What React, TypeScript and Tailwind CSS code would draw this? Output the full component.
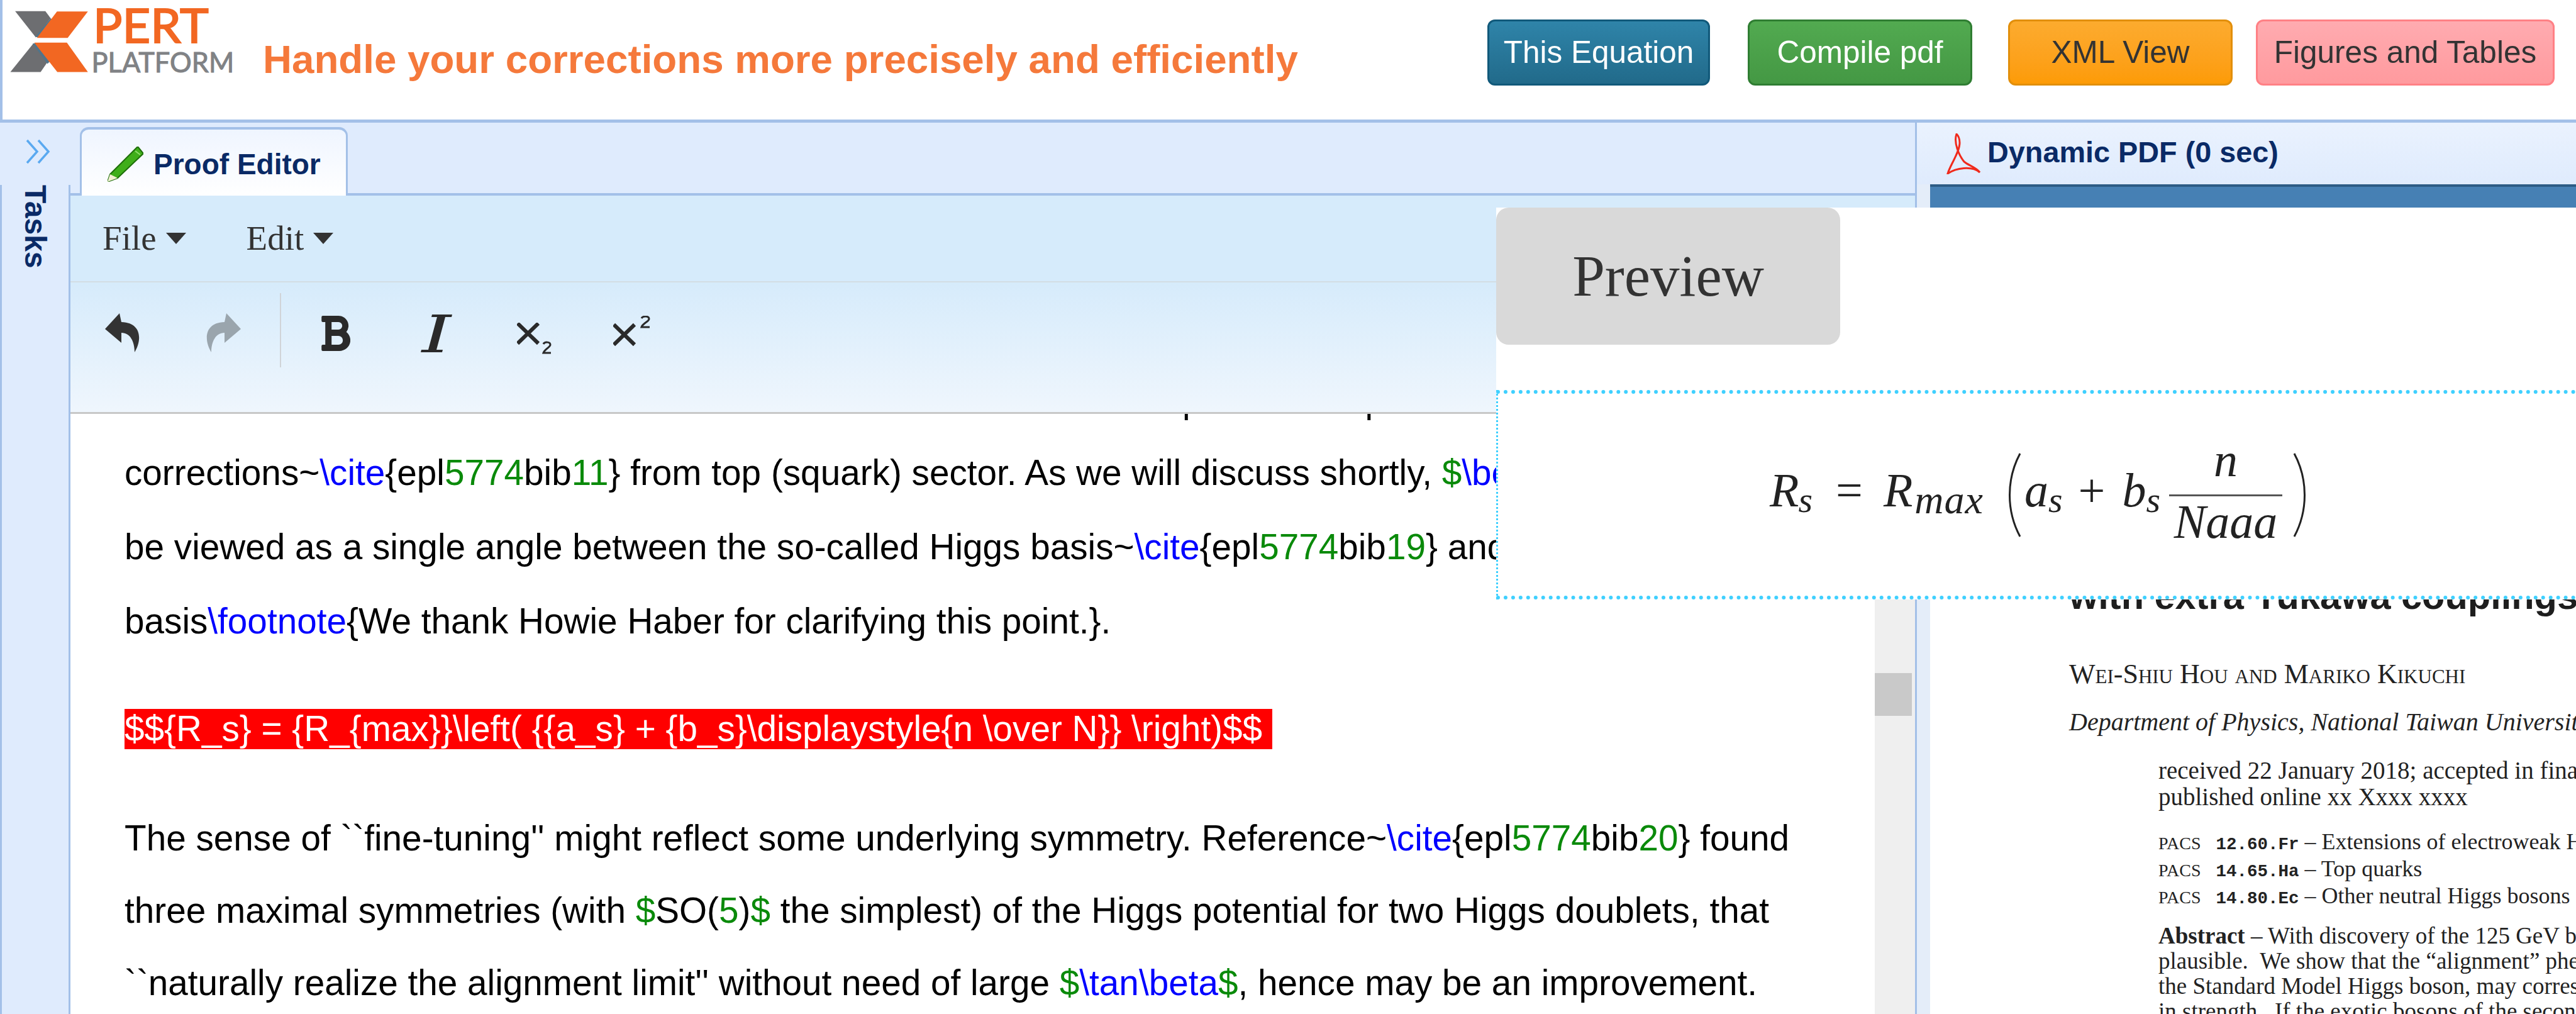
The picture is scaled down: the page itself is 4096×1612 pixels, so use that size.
import React from "react";
import { FaBold } from "react-icons/fa";

const B = ({ children }: { children: React.ReactNode }) => <span className="text-[#0000ff]">{children}</span>;
const G = ({ children }: { children: React.ReactNode }) => <span className="text-[#0a8a0a]">{children}</span>;

const Line = ({ children }: { children: React.ReactNode }) => (
  <div className="h-[115px] leading-[115px] whitespace-nowrap">{children}</div>
);

const Arrow = ({ className }: { className: string }) => (
  <svg viewBox="0 0 56 62" className={className}>
    <path d="M23 0 L0 25 L26 47 L26 31 C40 31 47 45 47 62 C58 45 60 15 26 14 Z" fill="currentColor" />
  </svg>
);

function Logo() {
  return (
    <svg viewBox="0 0 1568 540" className="w-[397px] h-[138px] -ml-[4px] shrink-0">
      <path d="M95 68 L285 68 L318 112 L225 232 Z" fill="#6d6e71" />
      <path d="M318 112 L332 124 L238 232 L222 228 Z" fill="#50748a" />
      <path d="M358 70 L552 70 L425 235 L232 235 Z" fill="#f26722" />
      <path d="M210 270 L300 385 L255 450 L65 450 Z" fill="#6d6e71" />
      <path d="M205 272 L222 268 L312 385 L298 398 Z" fill="#50748a" />
      <path d="M215 265 L420 265 L552 450 L360 450 Z" fill="#f26722" />
      <text x="585" y="265" fontFamily="Lato, sans-serif" fontSize="300" fill="#f26722" stroke="#f26722" strokeWidth="8" textLength="725" lengthAdjust="spacingAndGlyphs">PERT</text>
      <text x="575" y="450" fontFamily="Lato, sans-serif" fontSize="172" fill="#808285" stroke="#808285" strokeWidth="4" textLength="895" lengthAdjust="spacingAndGlyphs">PLATFORM</text>
    </svg>
  );
}

function Header() {
  return (
    <div className="h-[195px] shrink-0 bg-white border-l-[4px] border-b-[5px] border-[#a3c0e8] flex items-start">
      <Logo />
      <div className="ml-[21px] mt-[62px] text-[63.7px] leading-[64px] font-bold text-[#f5793b] whitespace-nowrap">
        Handle your corrections more precisely and efficiently
      </div>
      <div className="ml-auto mt-[31px] mr-[34px] flex items-start text-[49.5px]">
        <div className="w-[354px] h-[105px] flex items-center justify-center rounded-[12px] border-[3px] border-[#11597a] bg-linear-to-b from-[#2f84a9] to-[#216a8a] text-white">This Equation</div>
        <div className="w-[357px] h-[105px] ml-[60px] flex items-center justify-center rounded-[12px] border-[3px] border-[#2f7d32] bg-linear-to-b from-[#52aa50] to-[#449844] text-white">Compile pdf</div>
        <div className="w-[357px] h-[105px] ml-[57px] flex items-center justify-center rounded-[12px] border-[3px] border-[#e28f0b] bg-linear-to-b from-[#fcab2e] to-[#fd9b05] text-[#333]">XML View</div>
        <div className="w-[475px] h-[105px] ml-[37px] flex items-center justify-center rounded-[12px] border-[3px] border-[#ff8085] bg-linear-to-b from-[#ffabb0] to-[#ff9a9e] text-[#333]">Figures and Tables</div>
      </div>
    </div>
  );
}

function Sidebar() {
  return (
    <div className="w-[112px] shrink-0 flex flex-col">
      <div className="h-[99px] pt-[26px] pl-[41px]">
        <svg viewBox="0 0 39 40" className="w-[39px] h-[40px]" fill="none" stroke="#5aa9f0" strokeWidth="3.5">
          <path d="M2 2 L18 20 L2 38" />
          <path d="M20 2 L36 20 L20 38" />
        </svg>
      </div>
      <div className="flex-1 border-l-[3px] border-r-[3px] border-[#a3c0e8] pl-[28px]">
        <div className="[writing-mode:vertical-rl] text-[48px] leading-[50px] font-bold text-[#0a2a66]">Tasks</div>
      </div>
    </div>
  );
}

function Tab() {
  return (
    <div className="h-[116px] shrink-0 pt-[7px] pl-[15px] border-b-[4px] border-[#a3c0e8]">
      <div className="relative w-[426px] h-[109px] rounded-t-[14px] border-t-[4px] border-x-[3px] border-[#a3c0e8] bg-linear-to-b from-[#eff5ff] to-white flex items-center pl-[41px] pt-[5px]">
        <svg viewBox="0 0 57 56" className="w-[57px] h-[56px] shrink-0">
          <path d="M48 0 L57 11 L16 50 L0 56 L4 44 Z" fill="#3fae1a" stroke="#1d6e0a" strokeWidth="2" strokeLinejoin="round" />
          <path d="M4 44 L16 50 L0 56 Z" fill="#f2efd2" />
          <path d="M44 7 L52 13" stroke="#8fdc6a" strokeWidth="2" />
        </svg>
        <span className="ml-[16px] text-[46px] font-bold text-[#0a2a66] whitespace-nowrap">Proof Editor</span>
      </div>
    </div>
  );
}

function Caret() {
  return <span className="inline-block w-0 h-0 border-x-[16px] border-x-transparent border-t-[18px] border-t-[#333] ml-[15px]" />;
}

function Toolbar() {
  return (
    <div className="shrink-0 font-['Liberation_Serif',serif] text-[#333]">
      <div className="h-[138px] bg-[#d6ebfb] border-b-[2px] border-[#d3dde4] flex items-center pl-[51px] text-[55px]">
        <span>File</span>
        <Caret />
        <span className="ml-[96px]">Edit</span>
        <Caret />
      </div>
      <div className="h-[209px] bg-linear-to-b from-[#d6ebfb] to-[#eff6fd] border-b-[3px] border-[#c8c8c8] pl-[55px] pt-[17px] flex items-start">
        <Arrow className="w-[56px] h-[62px] mt-[32px] text-[#333]" />
        <Arrow className="w-[56px] h-[62px] mt-[32px] ml-[104px] text-[#9aa5ad] -scale-x-100" />
        <div className="w-[2px] h-[118px] ml-[62px] bg-[#d0d4d8]" />
        <FaBold className="w-[48px] h-[64px] mt-[32px] ml-[62px] text-[#2a2a2a]" />
        <svg viewBox="0 0 50 60" className="w-[50px] h-[60px] mt-[34px] ml-[112px] text-[#2a2a2a]">
          <path d="M18 0 L50 0 L49 4 L39 4 L25 56 L35 56 L34 60 L0 60 L1 56 L12 56 L26 4 L17 4 Z" fill="currentColor" />
        </svg>
        <svg viewBox="0 0 56 50" className="w-[56px] h-[50px] mt-[47px] ml-[103px]" fill="none" stroke="#2a2a2a">
          <path d="M1 1 L34 33 M34 1 L1 33" strokeWidth="6" />
          <path d="M42 34 C44 30 53 30 53 35 C53 39 44 42 42 48 L54 48" strokeWidth="3" />
        </svg>
        <svg viewBox="0 0 63 50" className="w-[63px] h-[50px] mt-[36px] ml-[97px]" fill="none" stroke="#2a2a2a">
          <path d="M1 14 L34 46 M34 14 L1 46" strokeWidth="6" />
          <path d="M45 4 C47 0 57 0 57 5 C57 9 47 12 45 18 L58 18" strokeWidth="3" />
        </svg>
      </div>
    </div>
  );
}

function EditorText() {
  return (
    <div className="flex-1 min-w-0 overflow-hidden pl-[86px] text-[56.7px] text-black">
      <div className="-mt-[79px]">
        <Line>
          <span className="inline-block ml-[1682px]">p</span>
          <span className="inline-block ml-[259px]">p</span>
        </Line>
        <Line>
          corrections~<B>\cite</B>{"{"}epl<G>5774</G>bib<G>11</G>{"}"} from top (squark) sector. As we will discuss shortly, <G>$</G><B>\beta</B><G>$</G> can
        </Line>
        <div className="mt-[3px]">
          <Line>
            be viewed as a single angle between the so-called Higgs basis~<B>\cite</B>{"{"}epl<G>5774</G>bib<G>19</G>{"}"} and the
          </Line>
        </div>
        <div className="mt-[3px]">
          <Line>
            basis<B>\footnote</B>{"{"}We thank Howie Haber for clarifying this point.{"}"}.
          </Line>
        </div>
        <div className="mt-[56px]">
          <Line>
            <span className="inline-block h-[64px] leading-[64px] bg-[#ff0000] text-white">
              $${"{"}R_s{"}"} = {"{"}R_{"{"}max{"}}"}\left( {"{{"}a_s{"}"} + {"{"}b_s{"}"}\displaystyle{"{"}n \over N{"}}"} \right)$$&nbsp;
            </span>
          </Line>
        </div>
        <div className="mt-[59px]">
          <Line>
            The sense of ``fine-tuning'' might reflect some underlying symmetry. Reference~<B>\cite</B>{"{"}epl<G>5774</G>bib<G>20</G>{"}"} found
          </Line>
          <Line>
            three maximal symmetries (with <G>$</G>SO(<G>5</G>)<G>$</G> the simplest) of the Higgs potential for two Higgs doublets, that
          </Line>
          <Line>
            ``naturally realize the alignment limit'' without need of large <G>$</G><B>\tan\beta</B><G>$</G>, hence may be an improvement.
          </Line>
        </div>
      </div>
    </div>
  );
}

function Scrollbar() {
  return (
    <div className="w-[64px] shrink-0 bg-[#efefef] pr-[5px]">
      <div className="mt-[412px] h-[68px] bg-[#c9c9c9]" />
    </div>
  );
}

function PdfPanel() {
  return (
    <div className="flex-1 min-w-0 flex flex-col border-l-[3px] border-[#a3c0e8] overflow-hidden">
      <div className="h-[98px] shrink-0 bg-linear-to-b from-[#eaf2fe] to-[#dfebfd] flex items-center pl-[47px]">
        <svg viewBox="0 0 54 65" className="w-[54px] h-[65px] shrink-0" fill="none" stroke="#f02a1c" strokeWidth="3">
          <path d="M16 1 C11 15 20 35 28 45 C35 51 47 54 53 62 C40 51 15 55 2 64 C6 50 21 30 21 15 C21 8 19 4 16 1 Z" />
        </svg>
        <span className="ml-[11px] -mt-[4px] text-[46.8px] font-bold text-[#0a2a66] whitespace-nowrap">Dynamic PDF (0 sec)</span>
      </div>
      <div className="flex-1 flex min-h-0 bg-[#e4edf9]">
        <div className="flex-1 min-w-0 ml-[21px] bg-white font-['Liberation_Serif',serif] text-[#222] whitespace-nowrap overflow-hidden">
          <div className="h-[200px] bg-[#4680b4] border-t-[4px] border-[#2d5c85]" />
          <div className="mt-[426px] pl-[221px] font-['Liberation_Sans',sans-serif] font-bold text-[59.5px] leading-[58px] text-[#1e1e1e]">with extra Yukawa couplings</div>
          <div className="mt-[75px] pl-[221px] text-[44px] leading-[40px] [font-variant:small-caps]">Wei-Shiu Hou and Mariko Kikuchi</div>
          <div className="mt-[36px] pl-[221px] text-[40px] leading-[40px] italic">Department of Physics, National Taiwan University, Taipei, Taiwan</div>
          <div className="mt-[36px] pl-[363px] text-[39px] leading-[42px]">
            <div>received 22 January 2018; accepted in final form</div>
            <div>published online xx Xxxx xxxx</div>
          </div>
          <div className="mt-[31px] pl-[363px] text-[36px] leading-[39px]">
            <div><span className="text-[28px]">PACS</span><span className="ml-[24px] text-[27.5px] font-['Liberation_Mono',monospace] font-bold">12.60.Fr</span> – Extensions of electroweak Higgs sector</div>
            <div><span className="text-[28px]">PACS</span><span className="ml-[24px] text-[27.5px] font-['Liberation_Mono',monospace] font-bold">14.65.Ha</span> – Top quarks</div>
            <div><span className="text-[28px]">PACS</span><span className="ml-[24px] text-[27.5px] font-['Liberation_Mono',monospace] font-bold">14.80.Ec</span> – Other neutral Higgs bosons</div>
          </div>
          <div className="mt-[20px] pl-[363px] text-[37px] leading-[40px]">
            <div><span className="font-bold">Abstract</span> – With discovery of the 125 GeV boson,</div>
            <div>plausible. &nbsp;We show that the “alignment” phenomenon</div>
            <div>the Standard Model Higgs boson, may correspond to</div>
            <div>in strength. &nbsp;If the exotic bosons of the second doublet</div>
          </div>
        </div>
      </div>
    </div>
  );
}

function Overlay() {
  return (
    <div className="absolute left-[2379px] top-[330px] right-0 h-[623px] bg-white flex flex-col font-['Liberation_Serif',serif]">
      <div className="w-[547px] h-[218px] shrink-0 rounded-[20px] bg-[#d9d9d9] flex items-center justify-center text-[93px] text-[#333]">Preview</div>
      <div className="mt-[72px] flex-1 border-y-[6px] border-l-[3px] border-r-0 border-dotted border-[#3fd0ff] flex items-center pl-[432px] text-[#222]">
        <div className="flex items-center text-[76px] leading-[76px] italic whitespace-nowrap">
          <div className="flex items-center pb-[16px]">
            <span>R</span><span className="text-[58px] translate-y-[16px] -ml-[1px]">s</span>
            <span className="ml-[37px] not-italic">=</span>
            <span className="ml-[33px]">R</span><span className="text-[64px] translate-y-[16px] ml-[3px] tracking-[1px]">max</span>
          </div>
          <svg viewBox="0 0 28 134" className="w-[28px] h-[134px] ml-[32px]" fill="none" stroke="#222" strokeWidth="3"><path d="M26 1 C4 42 4 92 26 133" /></svg>
          <div className="flex items-center pb-[16px] ml-[5px]">
            <span>a</span><span className="text-[58px] translate-y-[16px]">s</span>
            <span className="ml-[25px] not-italic">+</span>
            <span className="ml-[27px]">b</span><span className="text-[58px] translate-y-[16px]">s</span>
          </div>
          <div className="w-[180px] ml-[14px] flex flex-col items-center pb-[14px]">
            <span className="h-[60px] leading-[60px]">n</span>
            <span className="w-full h-[3px] mt-[25px] bg-[#555]" />
            <span className="h-[60px] leading-[60px] mt-[10px]">Naaa</span>
          </div>
          <svg viewBox="0 0 28 134" className="w-[28px] h-[134px] ml-[17px]" fill="none" stroke="#222" strokeWidth="3"><path d="M2 1 C24 42 24 92 2 133" /></svg>
        </div>
      </div>
    </div>
  );
}

export default function App() {
  return (
    <div className="relative w-[4096px] h-[1612px] overflow-hidden bg-[#dfebfd] flex flex-col font-['Liberation_Sans',sans-serif]">
      <Header />
      <div className="flex-1 min-h-0 flex">
        <div className="w-[3045px] shrink-0 flex">
          <Sidebar />
          <div className="flex-1 min-w-0 flex flex-col">
            <Tab />
            <Toolbar />
            <div className="flex-1 min-h-0 flex bg-white">
              <EditorText />
              <Scrollbar />
            </div>
          </div>
        </div>
        <PdfPanel />
      </div>
      <Overlay />
    </div>
  );
}
